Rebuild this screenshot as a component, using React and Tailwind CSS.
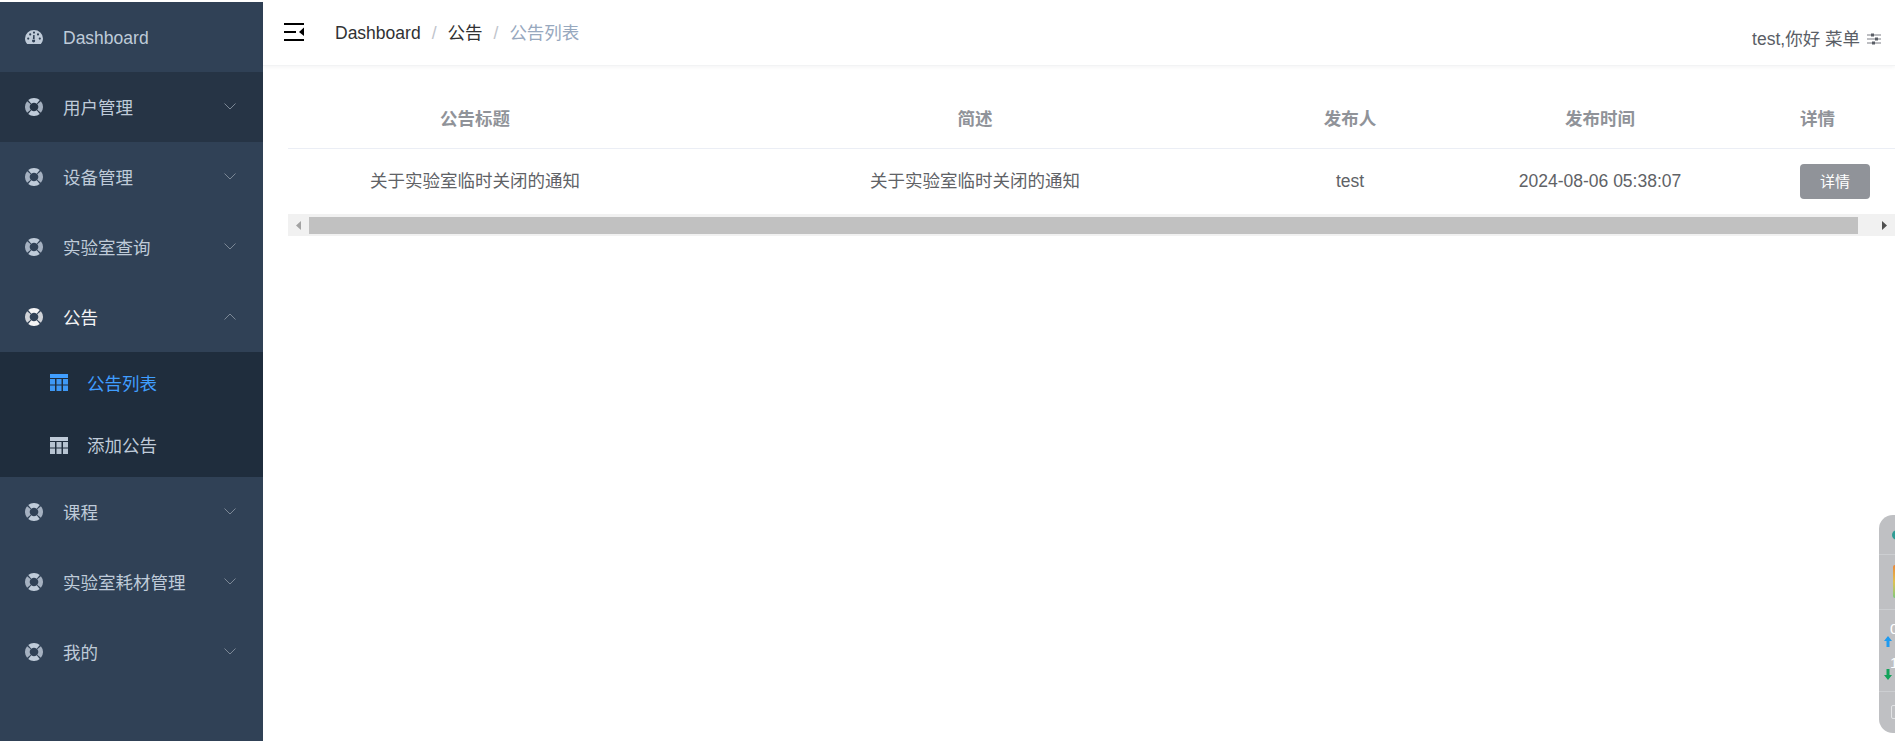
import React from "react";

function Chevron({ up }) {
  return (
    <svg width="12" height="7" viewBox="0 0 12 7" fill="none" stroke="#7c8896" strokeWidth="1" className="absolute right-[27px] top-1/2 -mt-[4px]">
      {up ? <path d="M0.5 6.5 L6 1 L11.5 6.5" /> : <path d="M0.5 0.5 L6 6 L11.5 0.5" />}
    </svg>
  );
}

const arc = (a0, a1, r = 6.6) => {
  const p = (a) => {
    const t = (a * Math.PI) / 180;
    return `${(9 + r * Math.sin(t)).toFixed(2)} ${(9 - r * Math.cos(t)).toFixed(2)}`;
  };
  return `M${p(a0)} A${r} ${r} 0 0 1 ${p(a1)}`;
};

function RingIcon() {
  return (
    <svg width="18" height="18" viewBox="0 0 18 18" fill="none" stroke="currentColor" strokeWidth="4.8">
      <path d={arc(-40, 40)} />
      <path d={arc(140, 220)} />
      <path d={arc(50, 130)} opacity="0.82" />
      <path d={arc(230, 310)} opacity="0.82" />
    </svg>
  );
}

const dot = (x, y, r) => `M${x - r} ${y} a${r} ${r} 0 1 0 ${2 * r} 0 a${r} ${r} 0 1 0 ${-2 * r} 0 Z`;

function DashIcon() {
  const d =
    "M2.2 15 C0.8 13.2 0 11.4 0 9.4 A9 8.4 0 0 1 18 9.4 C18 11.4 17.2 13.2 15.8 15 Z " +
    dot(3.2, 9.6, 1.1) + dot(5.2, 5.4, 1.1) + dot(9, 3.6, 1.1) + dot(13, 5.4, 1.1) + dot(14.8, 9.6, 1.1) + dot(8.6, 11.8, 1.6) +
    "M7.8 11 L8.2 6 L9.6 6 L9.6 11 Z";
  return (
    <svg width="18" height="16" viewBox="0 0 18 16" fill="currentColor" fillRule="evenodd">
      <path d={d} />
    </svg>
  );
}

function TableIcon() {
  const xs = [0, 6.5, 13];
  const ys = [5, 11.5];
  return (
    <svg width="18" height="18" viewBox="0 0 18 18" fill="currentColor" className="shrink-0">
      <rect x="0" y="0" width="18" height="4" />
      {ys.map((y) => xs.map((x) => <rect key={`${x}-${y}`} x={x} y={y} width="5" height="5.5" opacity="0.95" />))}
    </svg>
  );
}

function MenuRow({ label, icon, chevron, up, active, hover }) {
  return (
    <div className={`relative h-[70px] flex items-center pl-[25px] ${hover ? "bg-[#263445]" : ""} ${active ? "text-[#f4f4f5]" : "text-[#bfcbd9]"}`}>
      <span className="w-[18px] h-[18px] flex items-center justify-center shrink-0">
        {icon === "dash" ? <DashIcon /> : <RingIcon />}
      </span>
      <span className="ml-[20px] text-[17.5px] pt-[2px]">{label}</span>
      {chevron && <Chevron up={up} />}
    </div>
  );
}

function SubRow({ label, active }) {
  return (
    <div className={`h-[62.5px] flex items-center pl-[50px] ${active ? "text-[#409eff]" : "text-[#bfcbd9]"}`}>
      <TableIcon />
      <span className="ml-[19px] text-[17.5px] pt-[1px]">{label}</span>
    </div>
  );
}

function Sidebar() {
  return (
    <aside className="w-[263px] shrink-0 mt-[2px] bg-[#304156] h-[739px]">
      <MenuRow label="Dashboard" icon="dash" />
      <MenuRow label="用户管理" chevron hover />
      <MenuRow label="设备管理" chevron />
      <MenuRow label="实验室查询" chevron />
      <MenuRow label="公告" chevron up active />
      <div className="bg-[#1f2d3d]">
        <SubRow label="公告列表" active />
        <SubRow label="添加公告" />
      </div>
      <MenuRow label="课程" chevron />
      <MenuRow label="实验室耗材管理" chevron />
      <MenuRow label="我的" chevron />
    </aside>
  );
}

function Header() {
  return (
    <header className="h-[66px] flex items-start border-b border-[#f2f3f4] shadow-[0_1px_4px_rgba(0,21,41,0.05)] relative">
      <svg width="20" height="18" viewBox="0 0 20 18" className="ml-[21px] mt-[23px] shrink-0" fill="#000">
        <rect x="0" y="0" width="20" height="2" />
        <rect x="0" y="8" width="12" height="2" />
        <rect x="0" y="16" width="20" height="2" />
        <path d="M20 4.5 V13 L15 9 Z" />
      </svg>
      <nav className="ml-[31px] mt-[21px] flex text-[17.5px] leading-[24px] text-[#303133]">
        <span>Dashboard</span>
        <span className="mx-[11px] text-[#c0c4cc]">/</span>
        <span>公告</span>
        <span className="mx-[11px] text-[#c0c4cc]">/</span>
        <span className="text-[#97a8be]">公告列表</span>
      </nav>
      <div className="ml-auto mt-[27px] mr-[14px] flex items-center text-[17.5px] leading-[24px] text-[#5a5e66]">
        <span>test,你好 菜单</span>
        <svg width="14" height="12" viewBox="0 0 14 12" className="ml-[7px]" fill="#5a5e66">
          <rect x="0" y="1.5" width="14" height="1" opacity="0.8" />
          <rect x="0" y="5.5" width="14" height="1" opacity="0.8" />
          <rect x="0" y="9.5" width="14" height="1" opacity="0.8" />
          <rect x="4" y="0.5" width="3" height="3" />
          <rect x="8" y="4.5" width="3" height="3" />
          <rect x="5" y="8.5" width="3" height="3" />
        </svg>
      </div>
    </header>
  );
}

const cols = ["公告标题", "简述", "发布人", "发布时间"];
const row = ["关于实验室临时关闭的通知", "关于实验室临时关闭的通知", "test", "2024-08-06 05:38:07"];

function NoticeTable() {
  return (
    <div className="ml-[25px] mt-[22px] overflow-hidden">
      <table className="table-fixed border-collapse w-[1612px] text-[17.5px]">
        <colgroup>
          <col className="w-[374px]" />
          <col className="w-[626px]" />
          <col className="w-[124px]" />
          <col className="w-[376px]" />
          <col className="w-[112px]" />
        </colgroup>
        <thead>
          <tr className="h-[60px] border-b border-[#ebeef5]">
            {cols.map((c) => (
              <th key={c} className="text-center font-bold text-[#909399] pt-[2px]">{c}</th>
            ))}
            <th className="text-left pl-[12px] font-bold text-[#909399] pt-[2px]">详情</th>
          </tr>
        </thead>
        <tbody>
          <tr className="h-[66px]">
            {row.map((c, i) => (
              <td key={i} className="text-center text-[#606266]">{c}</td>
            ))}
            <td className="pl-[12px] pt-[1px]">
              <button className="w-[70px] h-[35px] rounded-[4px] bg-[#909399] text-white text-[15px] flex items-center justify-center">详情</button>
            </td>
          </tr>
        </tbody>
      </table>
      <div className="h-[22px] border-t-[3px] border-b-[2px] border-[#f1f1f1] bg-[#f1f1f1] flex items-center">
        <span className="w-[21px] flex justify-center shrink-0">
          <svg width="5" height="9" viewBox="0 0 5 9" fill="#a3a3a3"><path d="M5 0 V9 L0 4.5 Z" /></svg>
        </span>
        <div className="w-[1549px] h-full bg-[#c1c1c1] shrink-0" />
        <span className="w-[37px] flex justify-end pr-[7px] shrink-0 -translate-x-[1px]">
          <svg width="5" height="9" viewBox="0 0 5 9" fill="#505050"><path d="M0 0 V9 L5 4.5 Z" /></svg>
        </span>
      </div>
    </div>
  );
}

function Widget() {
  return (
    <div className="absolute left-[1879px] top-[515px] w-[60px] h-[218px] rounded-[14px] bg-[#bfc0c3] overflow-hidden text-white text-[15px] leading-none">
      <div className="h-[40px] border-b border-[#ccced1] relative">
        <div className="absolute left-[13px] top-[15px] w-[10px] h-[10px] rounded-full bg-[#2f9c95]" />
      </div>
      <div className="h-[55px] border-b border-[#ccced1] relative">
        <div className="absolute left-[14px] top-[10px] w-[10px] h-[33px] rounded-[2px] bg-gradient-to-b from-[#e8883a] via-[#e0c050] to-[#7dc87a]" />
      </div>
      <div className="h-[82px] border-b border-[#ccced1] relative">
        <span className="absolute left-[11px] top-[11px]">0</span>
        <svg width="8" height="11" viewBox="0 0 8 11" fill="#1e9bf0" className="absolute left-[5px] top-[26px]"><path d="M4 0 L8 5 H5.5 V11 H2.5 V5 H0 Z" /></svg>
        <span className="absolute left-[11px] top-[45px]">1</span>
        <svg width="8" height="11" viewBox="0 0 8 11" fill="#12a35a" className="absolute left-[5px] top-[59px]"><path d="M4 11 L8 6 H5.5 V0 H2.5 V6 H0 Z" /></svg>
      </div>
      <div className="relative">
        <div className="absolute left-[12px] top-[13px] w-[12px] h-[14px] border border-[#e2e3e5] rounded-[2px]" />
      </div>
    </div>
  );
}

export default function App() {
  return (
    <div className="relative flex w-[1895px] h-[741px] overflow-hidden bg-white font-['Liberation_Sans','Noto_Sans_CJK_SC',sans-serif]">
      <Sidebar />
      <main className="flex-1 min-w-0">
        <Header />
        <NoticeTable />
      </main>
      <Widget />
    </div>
  );
}
